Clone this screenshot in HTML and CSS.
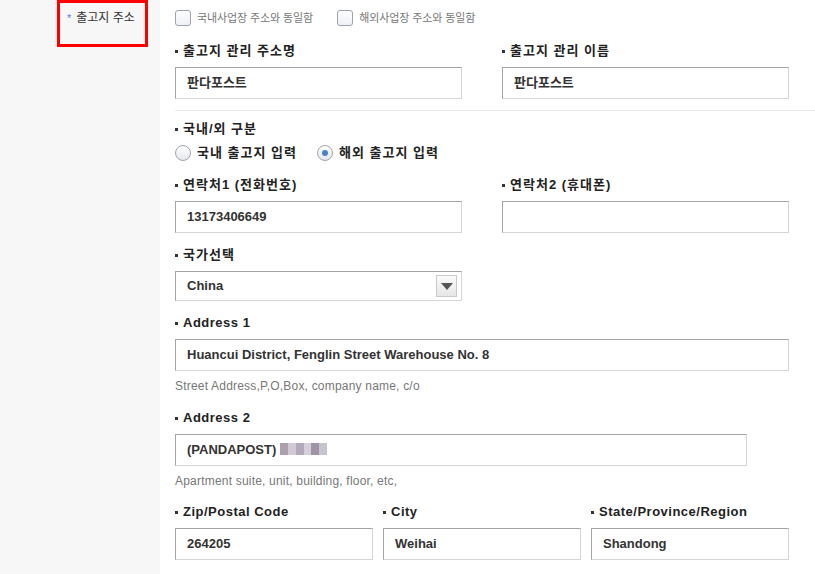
FILE: index.html
```html
<!DOCTYPE html>
<html lang="ko">

<head>
    <meta charset="UTF-8">
    <meta name="viewport" content="width=device-width, initial-scale=1.0">
    <title>출고지 주소</title>

    <link rel="stylesheet" href="styles.css">

</head>

<body>
    <div class="page">
        <aside class="side">
            <div class="side-title"><span class="req">*</span>출고지 주소</div>
            <div class="mark-box"></div>
        </aside>

        <main class="form">
            <div class="same-row">
                <label class="check"><span class="checkbox"></span>국내사업장 주소와 동일함</label>
                <label class="check"><span class="checkbox"></span>해외사업장 주소와 동일함</label>
            </div>

            <div class="row two first">
                <div class="field">
                    <div class="field-label">출고지 관리 주소명</div>
                    <div class="input col-half">판다포스트</div>
                </div>
                <div class="field">
                    <div class="field-label">출고지 관리 이름</div>
                    <div class="input col-half">판다포스트</div>
                </div>
            </div>

            <div class="divider"></div>

            <div class="field-label group-label">국내/외 구분</div>
            <div class="radio-row">
                <label class="radio"><span class="radio-dot"></span>국내 출고지 입력</label>
                <label class="radio"><span class="radio-dot checked"></span>해외 출고지 입력</label>
            </div>

            <div class="row two contact">
                <div class="field">
                    <div class="field-label">연락처1 (전화번호)</div>
                    <div class="input col-half">13173406649</div>
                </div>
                <div class="field">
                    <div class="field-label">연락처2 (휴대폰)</div>
                    <div class="input col-half"></div>
                </div>
            </div>

            <div class="field country">
                <div class="field-label">국가선택</div>
                <div class="select col-half">
                    <span>China</span>
                    <span class="select-btn"></span>
                </div>
            </div>

            <div class="field addr1">
                <div class="field-label en">Address 1</div>
                <div class="input col-full">Huancui District, Fenglin Street Warehouse No. 8</div>
                <div class="help">Street Address,P,O,Box, company name, c/o</div>
            </div>

            <div class="field addr2">
                <div class="field-label en">Address 2</div>
                <div class="input col-wide">(PANDAPOST) <span class="blur"></span></div>
                <div class="help">Apartment suite, unit, building, floor, etc,</div>
            </div>

            <div class="row three">
                <div class="field">
                    <div class="field-label en">Zip/Postal Code</div>
                    <div class="input">264205</div>
                </div>
                <div class="field">
                    <div class="field-label en">City</div>
                    <div class="input">Weihai</div>
                </div>
                <div class="field">
                    <div class="field-label en">State/Province/Region</div>
                    <div class="input">Shandong</div>
                </div>
            </div>
        </main>
    </div>
</body>
</html>
```

FILE: styles.css
```css
body {
    margin: 0;
    font-family: 'Liberation Sans', 'Noto Sans CJK KR', sans-serif;
    background-color: #ffffff;
    color: #333;
}

.page {
    display: flex;
    min-height: 574px;
}

/* left column with the section title */
.side {
    position: relative;
    width: 160px;
    flex-shrink: 0;
    background-color: #f7f7f7;
}

.side-title {
    padding: 10px 0 0 67px;
    font-size: 12px;
    line-height: 16px;
    color: #333;
}

.req {
    color: #5a7be0;
    font-size: 11px;
    margin-right: 5px;
}

/* red annotation box drawn over the title */
.mark-box {
    position: absolute;
    left: 57px;
    top: 0;
    width: 91px;
    height: 47px;
    border: 3px solid #ff0000;
    box-sizing: border-box;
}

.form {
    flex: 1;
    padding-left: 15px;
}

/* same-as checkboxes */
.same-row {
    display: flex;
    gap: 24px;
    padding-top: 10px;
}

.check {
    display: flex;
    align-items: center;
    gap: 6px;
    font-size: 11px;
    letter-spacing: -0.1px;
    line-height: 16px;
    color: #777;
}

.checkbox {
    width: 16px;
    height: 16px;
    box-sizing: border-box;
    border: 1px solid #9da3ab;
    border-radius: 3px;
    background: linear-gradient(#fdfdfe, #eef1f5);
}

.row {
    display: grid;
}

.two {
    grid-template-columns: 287px 287px;
    column-gap: 40px;
}

.three {
    grid-template-columns: 198px 198px 198px;
    column-gap: 10px;
    margin-top: 15px;
}

.first {
    margin-top: 16px;
}

.field {
    display: flex;
    flex-direction: column;
    gap: 8px;
}

.field-label {
    position: relative;
    padding-left: 8px;
    font-size: 13px;
    font-weight: bold;
    line-height: 17px;
    letter-spacing: 1px;
    color: #222;
}

.field-label::before {
    content: '';
    position: absolute;
    left: 0;
    top: 8px;
    width: 3px;
    height: 3px;
    background-color: #333;
}

.field-label.en {
    letter-spacing: 0.5px;
}

.input, .select {
    box-sizing: border-box;
    height: 32px;
    padding: 0 11px;
    border: 1px solid #d6d6d6;
    border-top-color: #a4a4a4;
    border-left-color: #a4a4a4;
    font-size: 13px;
    font-weight: bold;
    line-height: 30px;
    color: #333;
    white-space: nowrap;
}

.col-half {
    width: 287px;
}

.col-full {
    width: 614px;
}

.col-wide {
    width: 572px;
}

.divider {
    height: 1px;
    margin-top: 11px;
    background-color: #e9e9e9;
}

.group-label {
    margin-top: 9px;
}

.radio-row {
    display: flex;
    gap: 20px;
    margin-top: 8px;
}

.radio {
    display: flex;
    align-items: center;
    gap: 6px;
    font-size: 13px;
    font-weight: bold;
    letter-spacing: 1px;
    line-height: 16px;
    color: #222;
}

.radio-dot {
    position: relative;
    width: 16px;
    height: 16px;
    box-sizing: border-box;
    border: 1px solid #a0a6ae;
    border-radius: 50%;
    background: linear-gradient(#ffffff, #e4e7ec);
}

.radio-dot.checked::after {
    content: '';
    position: absolute;
    left: 4px;
    top: 4px;
    width: 6px;
    height: 6px;
    border-radius: 50%;
    background: #4a80c8;
}

.contact {
    margin-top: 15px;
}

.country {
    margin-top: 13px;
}

.select {
    display: flex;
    align-items: center;
    justify-content: space-between;
    height: 30px;
    padding-right: 4px;
    line-height: 28px;
}

.select-btn {
    position: relative;
    width: 21px;
    height: 22px;
    box-sizing: border-box;
    border: 1px solid #c9c9c9;
    background: linear-gradient(#fbfbfb, #e6e6e6);
}

.select-btn::after {
    content: '';
    position: absolute;
    left: 4px;
    top: 7px;
    border-left: 6px solid transparent;
    border-right: 6px solid transparent;
    border-top: 7px solid #555;
}

.addr1 {
    margin-top: 13px;
}

.addr2 {
    margin-top: 16px;
}

.help {
    font-size: 12px;
    line-height: 14px;
    letter-spacing: 0.2px;
    color: #777;
}

/* pixelated blur hiding the rest of the address */
.blur {
    display: inline-block;
    width: 47px;
    height: 12px;
    vertical-align: -1px;
    background: linear-gradient(90deg, #9c8f9e 0 8px, #c8c0cc 8px 16px, #a69ab0 16px 24px, #ccc6d2 24px 31px, #8e8096 31px 39px, #bdb8c6 39px);
    opacity: 0.85;
}
```
